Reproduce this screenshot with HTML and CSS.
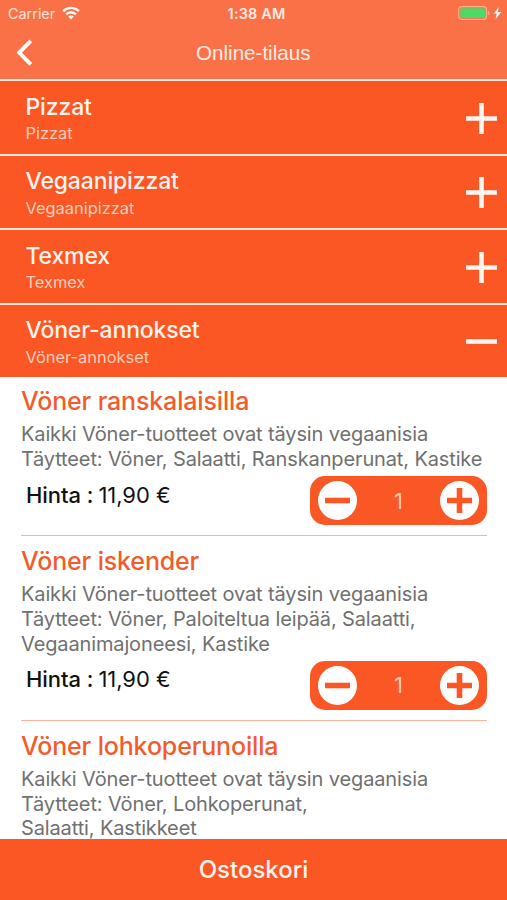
FILE: index.html
```
<!DOCTYPE html>
<html lang="fi">
<head>
<meta charset="utf-8">
<title>Online-tilaus</title>
<link rel="stylesheet" href="styles.css">
</head>
<body>
<div class="app">
  <header class="header">
    <div class="status">
      <div class="carrier">
        <span>Carrier</span>
        <svg class="wifi" width="18" height="14" viewBox="0 0 18 14" fill="none" stroke="#fff" stroke-width="2.4">
          <path d="M1.2 5.1a11 11 0 0 1 15.6 0"/>
          <path d="M4.1 8.4a7 7 0 0 1 9.8 0"/>
          <path d="M6.2 10.6a3.9 3.9 0 0 1 5.6 0L9 13.4z" fill="#fff" stroke="none"/>
        </svg>
      </div>
      <span class="clock">1:38 AM</span>
      <svg class="battery" width="44" height="14" viewBox="0 0 44 14">
        <rect x="0.8" y="0.6" width="27.6" height="12.8" rx="3" fill="none" stroke="#fdb08f" stroke-width="1.1"/>
        <rect x="2.4" y="2.2" width="24.6" height="9.6" rx="1.4" fill="#4cd964"/>
        <path d="M29.8 4.8q1.7.6 1.7 2.2t-1.7 2.2z" fill="#fdb08f"/>
        <path d="M40.8 1 35.6 7.7h3.2l-1.2 5.5 5.6-7.2h-3.5z" fill="#fff"/>
      </svg>
    </div>
    <div class="navbar">
      <svg class="back" width="18" height="28" viewBox="0 0 18 28" fill="none" stroke="#fff" stroke-width="3.8"><path d="M15.8 1.8 4.2 13.6l11.6 11.8"/></svg>
      <h1 class="page-title">Online-tilaus</h1>
    </div>
  </header>

  <section class="category">
    <div><h2>Pizzat</h2><p>Pizzat</p></div>
    <svg class="toggle" width="31" height="31" viewBox="0 0 31 31"><path d="M0 15.5h31M15.5 0v31"/></svg>
  </section>
  <section class="category">
    <div><h2>Vegaanipizzat</h2><p>Vegaanipizzat</p></div>
    <svg class="toggle" width="31" height="31" viewBox="0 0 31 31"><path d="M0 15.5h31M15.5 0v31"/></svg>
  </section>
  <section class="category">
    <div><h2>Texmex</h2><p>Texmex</p></div>
    <svg class="toggle" width="31" height="31" viewBox="0 0 31 31"><path d="M0 15.5h31M15.5 0v31"/></svg>
  </section>
  <section class="category">
    <div><h2>Vöner-annokset</h2><p>Vöner-annokset</p></div>
    <svg class="toggle" width="31" height="31" viewBox="0 0 31 31"><path d="M0 15.5h31"/></svg>
  </section>

  <main class="products">
    <article class="product">
      <h3>Vöner ranskalaisilla</h3>
      <p class="desc">Kaikki Vöner-tuotteet ovat täysin vegaanisia<br>Täytteet: Vöner, Salaatti, Ranskanperunat, Kastike</p>
      <div class="order">
        <div class="price"><span class="label">Hinta :</span><span>11,90 €</span></div>
        <div class="stepper">
          <svg class="step" width="39" height="39" viewBox="0 0 39 39"><circle cx="19.5" cy="19.5" r="19.5"/><path d="M7 19.5h25"/></svg>
          <span class="count">1</span>
          <svg class="step" width="39" height="39" viewBox="0 0 39 39"><circle cx="19.5" cy="19.5" r="19.5"/><path d="M7 19.5h25M19.5 7v25"/></svg>
        </div>
      </div>
    </article>
    <article class="product">
      <h3>Vöner iskender</h3>
      <p class="desc">Kaikki Vöner-tuotteet ovat täysin vegaanisia<br>Täytteet: Vöner, Paloiteltua leipää, Salaatti,<br>Vegaanimajoneesi, Kastike</p>
      <div class="order">
        <div class="price"><span class="label">Hinta :</span><span>11,90 €</span></div>
        <div class="stepper">
          <svg class="step" width="39" height="39" viewBox="0 0 39 39"><circle cx="19.5" cy="19.5" r="19.5"/><path d="M7 19.5h25"/></svg>
          <span class="count">1</span>
          <svg class="step" width="39" height="39" viewBox="0 0 39 39"><circle cx="19.5" cy="19.5" r="19.5"/><path d="M7 19.5h25M19.5 7v25"/></svg>
        </div>
      </div>
    </article>
    <article class="product">
      <h3>Vöner lohkoperunoilla</h3>
      <p class="desc">Kaikki Vöner-tuotteet ovat täysin vegaanisia<br>Täytteet: Vöner, Lohkoperunat,<br>Salaatti, Kastikkeet</p>
    </article>
  </main>

  <footer class="cart">Ostoskori</footer>
</div>
</body>
</html>
```
FILE: styles.css
```
* { box-sizing: border-box; margin: 0; padding: 0; }
body {
  font-family: Inter, "Liberation Sans", sans-serif;
  background: #fff;
}
svg { display: block; flex: none; }
.app {
  display: flex;
  flex-direction: column;
  height: 900px;
  overflow: hidden;
}
.header {
  flex: none;
  height: 79px;
  background: #fb7147;
  color: #fff;
}
.status {
  display: grid;
  grid-template-columns: 1fr auto 1fr;
  align-items: center;
  height: 27px;
  padding: 0 5px 0 8px;
}
.carrier {
  display: flex;
  align-items: center;
  gap: 7px;
  font-size: 14.4px;
  color: #ffe3d9;
}
.wifi { margin-top: -2px; }
.clock {
  font-size: 14.4px;
  font-weight: 600;
  letter-spacing: 0.2px;
  color: #ffece5;
  padding-left: 3px;
}
.battery { justify-self: end; margin-top: -1px; }
.navbar {
  display: grid;
  grid-template-columns: 1fr auto 1fr;
  align-items: center;
  height: 52px;
  padding: 0 15px 0 14.5px;
}
.page-title {
  grid-column: 2;
  font: 400 20.6px "Liberation Sans", Arial, sans-serif;
  color: #ffede6;
}
.category {
  flex: none;
  display: flex;
  justify-content: space-between;
  align-items: center;
  height: 74.5px;
  padding: 1.5px 10px 0 25.5px;
  border-top: 2px solid #ffe6dc;
  background: #fb5725;
}
.category h2 {
  font-size: 23px;
  font-weight: 500;
  line-height: 28px;
  letter-spacing: -0.15px;
  color: #fff3ee;
}
.category p {
  font-size: 16.4px;
  line-height: 20px;
  margin-top: 2.5px;
  color: #ffcdbb;
}
.toggle { fill: none; stroke: #fff5f1; stroke-width: 4.6; }
.products {
  flex: 1;
  min-height: 0;
  overflow: hidden;
  padding: 0 20px 0 21px;
}
.product { padding-top: 8px; }
.product + .product { padding-top: 9px; border-top: 1px solid #fdb198; }
.product h3 {
  font-size: 25px;
  font-weight: 500;
  line-height: 32px;
  letter-spacing: -0.15px;
  color: #f25c2d;
}
.desc {
  margin-top: 5px;
  font-size: 20px;
  line-height: 24.75px;
  letter-spacing: -0.13px;
  color: #707070;
  white-space: nowrap;
}
.order {
  display: flex;
  justify-content: space-between;
  margin-top: 4.5px;
  padding-bottom: 10px;
}
.price {
  display: flex;
  gap: 5px;
  padding: 5.5px 0 0 5px;
  font-size: 22px;
  line-height: 27px;
  letter-spacing: -0.05px;
  color: #111;
}
.price .label { font-weight: 500; }
.stepper {
  display: flex;
  align-items: center;
  justify-content: space-between;
  width: 177px;
  height: 49px;
  padding: 0 8px;
  border-radius: 15px;
  background: #fb5725;
}
.step { fill: #fff; stroke: none; }
.step path { stroke: #fb5725; stroke-width: 5.6; }
.count { font-size: 22px; color: #ffcdbb; }
.cart {
  flex: none;
  height: 61px;
  line-height: 61px;
  text-align: center;
  font-size: 24px;
  font-weight: 500;
  background: #fb5725;
  color: #fff3ee;
}
```
